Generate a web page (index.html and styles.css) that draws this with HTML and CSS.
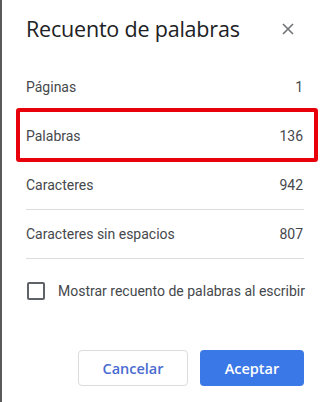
FILE: index.html
```html
<!DOCTYPE html>
<html lang="es">
<head>
<meta charset="utf-8">
<link rel="stylesheet" href="styles.css">
</head>
<body>
<div class="frame">
  <div class="dialog">
    <div class="header">
      <h1 class="title">Recuento de palabras</h1>
      <svg class="close" width="12" height="12" viewBox="0 0 12 12"><path d="M1 1L11 11M11 1L1 11" stroke="#6f7378" stroke-width="1.6" fill="none"/></svg>
    </div>
    <div class="rows">
      <div class="row"><span>Páginas</span><span>1</span></div>
      <div class="row highlight"><span>Palabras</span><span>136</span></div>
      <div class="row"><span>Caracteres</span><span>942</span></div>
      <div class="row"><span>Caracteres sin espacios</span><span>807</span></div>
    </div>
    <label class="check"><span class="box"></span><span class="check-label">Mostrar recuento de palabras al escribir</span></label>
    <div class="actions">
      <button class="btn btn-secondary">Cancelar</button>
      <button class="btn btn-primary">Aceptar</button>
    </div>
  </div>
</div>
</body>
</html>
```
FILE: styles.css
```css
html, body {
  margin: 0;
  padding: 0;
  background: #fff;
}
.frame {
  width: 328px;
  height: 402px;
  box-sizing: border-box;
  border-left: 2px solid #5a5a5a;
  background: #fff;
  overflow: hidden;
}
.dialog {
  padding: 0 24px 0 24px;
  font-family: Roboto, "Liberation Sans", sans-serif;
  color: #45484c;
}
.header {
  height: 63px;
  display: flex;
  align-items: center;
  justify-content: space-between;
  padding-right: 10px;
  box-sizing: border-box;
  padding-bottom: 6px;
}
.title {
  margin: 0;
  font-family: "Open Sans", Roboto, sans-serif;
  font-weight: 400;
  font-size: 21.5px;
  color: #202124;
  letter-spacing: -0.2px;
}
.close {
  display: block;
}
.rows {
  display: flex;
  flex-direction: column;
}
.row {
  position: relative;
  height: 49px;
  box-sizing: border-box;
  border-bottom: 1px solid #dadce0;
  display: flex;
  align-items: center;
  justify-content: space-between;
  font-size: 14px;
  padding-right: 1px;
}
.highlight::after {
  content: "";
  position: absolute;
  left: -10px;
  right: -14px;
  top: -4px;
  bottom: -2px;
  border: 4px solid #e8000b;
  border-radius: 3px;
}
.check {
  display: flex;
  align-items: center;
  height: 64px;
  padding-left: 1px;
  white-space: nowrap;
}
.box {
  width: 18px;
  height: 18px;
  box-sizing: border-box;
  border: 2px solid #5f6368;
  border-radius: 2px;
  flex: none;
}
.check-label {
  margin-left: 13px;
  font-size: 14px;
}
.actions {
  display: flex;
  justify-content: flex-end;
  gap: 12px;
  margin-top: 27px;
}
.btn {
  height: 36px;
  border-radius: 4px;
  font-family: "Open Sans", Roboto, sans-serif;
  font-weight: 600;
  font-size: 14.5px;
  cursor: pointer;
}
.btn-secondary {
  width: 110px;
  background: #fff;
  border: 1px solid #dadce0;
  color: #4a6bd0;
}
.btn-primary {
  width: 104px;
  background: #3b78e7;
  border: none;
  color: #fff;
}
```
